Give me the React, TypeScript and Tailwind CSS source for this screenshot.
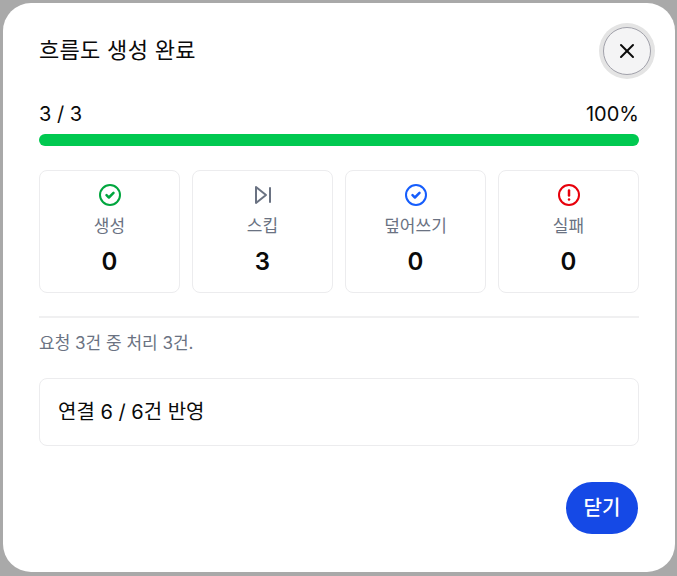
import { X } from 'lucide-react'

const FONT = "font-['Inter','Noto_Sans_CJK_KR',sans-serif]"

function CheckIcon({ className }: { className: string }) {
  return (
    <svg viewBox="0 0 24 24" fill="none" stroke="currentColor" strokeWidth="2" strokeLinecap="round" strokeLinejoin="round" className={className}>
      <circle cx="12" cy="12" r="10" />
      <path d="m8.5 12.2 2.4 2.3 4.6-4.6" strokeWidth="2.5" />
    </svg>
  )
}

function SkipIcon({ className }: { className: string }) {
  return (
    <svg viewBox="0 0 24 24" fill="none" stroke="currentColor" strokeWidth="2" strokeLinecap="round" strokeLinejoin="round" className={className}>
      <polygon points="5 4 15 12 5 20 5 4" />
      <line x1="19" y1="5" x2="19" y2="19" />
    </svg>
  )
}

function AlertIcon({ className }: { className: string }) {
  return (
    <svg viewBox="0 0 24 24" fill="none" stroke="currentColor" strokeWidth="2" strokeLinecap="round" strokeLinejoin="round" className={className}>
      <circle cx="12" cy="12" r="10" />
      <path d="M12 7.5v5" strokeWidth="2.5" />
      <path d="M12 16.5h.01" strokeWidth="2.5" />
    </svg>
  )
}

function StatCard({ icon, label, value }: { icon: React.ReactNode; label: string; value: number }) {
  return (
    <div className="flex h-[123px] flex-col items-center rounded-lg border border-[#ececee] pt-[12px]">
      {icon}
      <div className="mt-[8px] text-[17px] leading-[22px] text-[#6a7282]">{label}</div>
      <div className="mt-[11px] text-[24px] leading-[28px] font-semibold text-[#0a0a0a]">{value}</div>
    </div>
  )
}

export default function App() {
  return (
    <div className={`${FONT} h-[576px] w-[677px] overflow-hidden bg-[#a9a9a9] pt-[3px] pr-[2px] pb-[4px] pl-[3px]`}>
      <div className="relative h-[569px] w-[672px] rounded-[28px] bg-white px-[36px] text-[#0a0a0a]">
        <h1 className="pt-[33px] text-[22px] leading-[28px] font-normal tracking-[0.3px]">흐름도 생성 완료</h1>

        <button className="absolute top-[24px] right-[24px] flex h-[48px] w-[48px] items-center justify-center rounded-full border border-[#a1a1aa] bg-[#f4f4f5] shadow-[0_0_0_4px_#e4e4e4]">
          <X className="h-[24px] w-[24px] text-[#0a0a0a]" strokeWidth={2} />
        </button>

        <div className="mt-[36px] flex items-center justify-between text-[20px] leading-[28px]">
          <span>3 / 3</span>
          <span>100%</span>
        </div>
        <div className="mt-[6px] h-[12px] rounded-full bg-[#00c950]" />

        <div className="mt-[24px] grid grid-cols-4 gap-[12px]">
          <StatCard icon={<CheckIcon className="h-[24px] w-[24px] text-[#00a63e]" />} label="생성" value={0} />
          <StatCard icon={<SkipIcon className="h-[24px] w-[24px] text-[#6a7282]" />} label="스킵" value={3} />
          <StatCard icon={<CheckIcon className="h-[24px] w-[24px] text-[#155dfc]" />} label="덮어쓰기" value={0} />
          <StatCard icon={<AlertIcon className="h-[24px] w-[24px] text-[#e7000b]" />} label="실패" value={0} />
        </div>

        <div className="mt-[23px] h-[2px] bg-[#f0f0f1]" />
        <p className="mt-[14px] text-[17px] leading-[22px] text-[#6a7282]">요청 3건 중 처리 3건.</p>

        <div className="mt-[24px] flex h-[68px] items-center rounded-lg border border-[#ececee] px-[18px] text-[20px] font-normal">
          연결 6 / 6건 반영
        </div>

        <div className="mt-[36px] mr-[1px] flex justify-end">
          <button className="h-[52px] w-[72px] rounded-full bg-[#1549e6] text-[20px] font-medium text-white">닫기</button>
        </div>
      </div>
    </div>
  )
}
